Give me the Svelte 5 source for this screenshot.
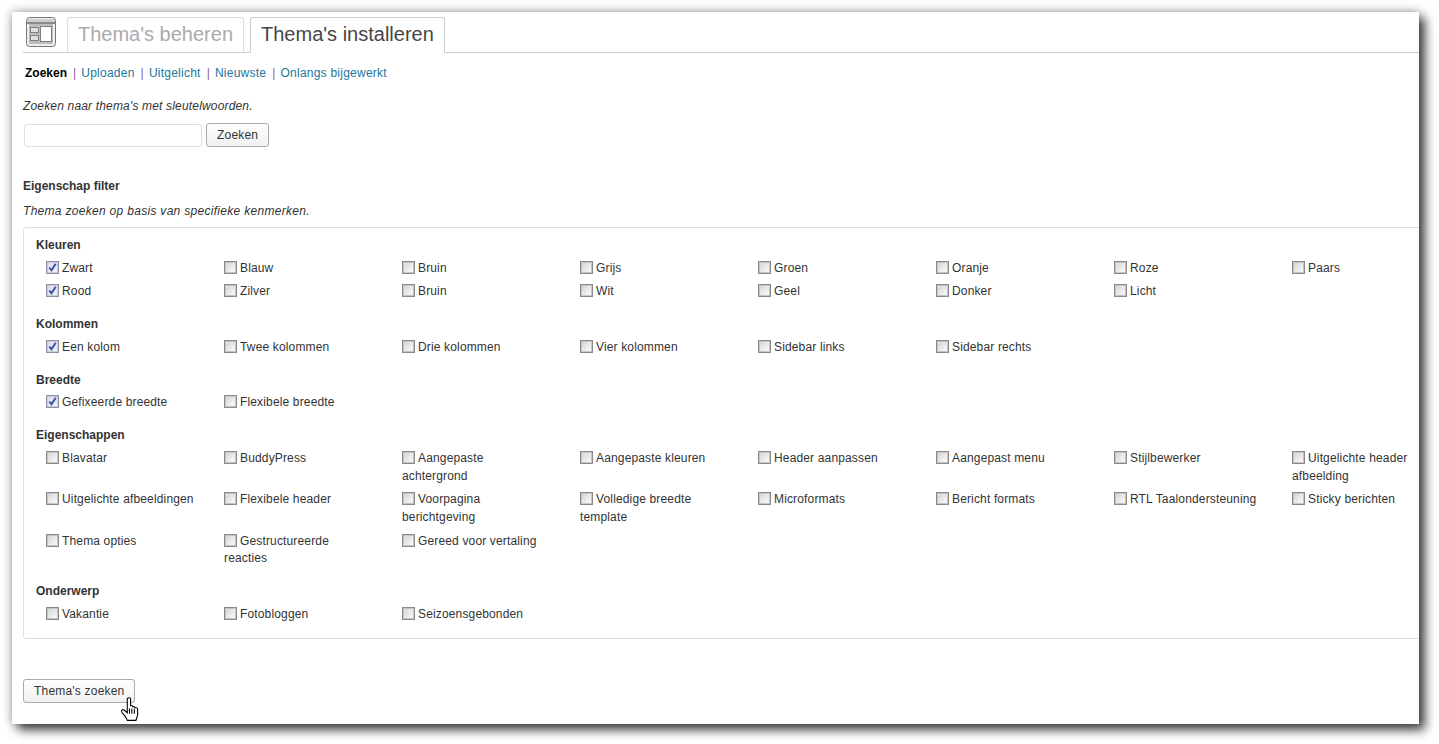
<script>
  const groups = [
    { title: 'Kleuren', items: [['Zwart',1],['Blauw'],['Bruin'],['Grijs'],['Groen'],['Oranje'],['Roze'],['Paars'],['Rood',1],['Zilver'],['Bruin'],['Wit'],['Geel'],['Donker'],['Licht']] },
    { title: 'Kolommen', items: [['Een kolom',1],['Twee kolommen'],['Drie kolommen'],['Vier kolommen'],['Sidebar links'],['Sidebar rechts']] },
    { title: 'Breedte', kind: 'narrow', items: [['Gefixeerde breedte',1],['Flexibele breedte']] },
    { title: 'Eigenschappen', kind: 'wrap', items: [['Blavatar'],['BuddyPress'],['Aangepaste achtergrond'],['Aangepaste kleuren'],['Header aanpassen'],['Aangepast menu'],['Stijlbewerker'],['Uitgelichte header afbeelding'],['Uitgelichte afbeeldingen'],['Flexibele header'],['Voorpagina berichtgeving'],['Volledige breedte template'],['Microformats'],['Bericht formats'],['RTL Taalondersteuning'],['Sticky berichten'],['Thema opties'],['Gestructureerde reacties'],['Gereed voor vertaling']] },
    { title: 'Onderwerp', items: [['Vakantie'],['Fotobloggen'],['Seizoensgebonden']] }
  ];
  const links = ['Uploaden','Uitgelicht','Nieuwste','Onlangs bijgewerkt'];
</script>

<div class="window">
  <header class="tabs">
    <svg class="logo" width="30" height="30" viewBox="0 0 30 30">
      <rect x=".5" y=".5" width="29" height="29" rx="3" fill="#efefef" stroke="#777"/>
      <rect x="1" y="2" width="28" height="3" fill="#cfcfcf"/>
      <rect x="1" y="5" width="28" height="2" fill="#8a8a8a"/>
      <rect x="3" y="7" width="24" height="20" fill="#bdbdbd"/>
      <rect x="4.500" y="10.500" width="8" height="5" fill="#e0e0e0" stroke="#808080"/>
      <rect x="4.500" y="18.500" width="8" height="5" fill="#e0e0e0" stroke="#808080"/>
      <rect x="14.500" y="9.500" width="11" height="15" fill="#fff" stroke="#808080"/>
    </svg>
    <span class="tab">Thema's beheren</span>
    <span class="tab active">Thema's installeren</span>
  </header>

  <nav class="sub"><b>Zoeken</b>{#each links as l}<i class="sep">|</i><a href="#top">{l}</a>{/each}</nav>

  <p class="note first">Zoeken naar thema's met sleutelwoorden.</p>
  <div class="search">
    <input type="text" />
    <button>Zoeken</button>
  </div>

  <h3>Eigenschap filter</h3>
  <p class="note second">Thema zoeken op basis van specifieke kenmerken.</p>

  <section class="box">
    {#each groups as g}
      <h4>{g.title}</h4>
      <div class="grid" class:narrow={g.kind === 'narrow'} class:wrap={g.kind === 'wrap'}>
        {#each g.items as it}
          <label>
            <span class="cb" class:on={it[1]}>
              {#if it[1]}
                <svg width="11" height="11" viewBox="0 0 11 11"><path d="M2.300 5.500 L4.500 8.300 L8.700 1.800" fill="none" stroke="#3f51a8" stroke-width="2"/></svg>
              {/if}
            </span>{it[0]}
          </label>
        {/each}
      </div>
    {/each}
  </section>

  <button class="submit">Thema's zoeken</button>
  <svg class="cursor" width="20" height="25" viewBox="0 0 18 23">
    <path d="M6.500 1.500C7 .5 9 .5 9.500 1.500V8c1-.5 2 0 2 1 1-.5 2 0 2 1 1-.5 2.500 0 2.500 1.500V16c0 2-1 3-1.500 5.500H6.500C6 19 3.500 16.500 1.500 14c-1-1.500.5-3 2-2l3 2.500Z" fill="#fff" stroke="#000" stroke-width="1"/>
    <path d="M8.500 10.500v5M10.700 10.500v5M13 11v4.500" stroke="#000" stroke-width="1" fill="none"/>
  </svg>
</div>

<style>
  :global(body) { margin: 0; background: #fff; overflow: hidden; }
  :global(#app) { width: 1439px; height: 744px; padding: 12px 0 0 12px; box-sizing: border-box; overflow: hidden; }
  .window {
    position: relative;
    box-sizing: border-box;
    width: 1407px;
    height: 712px;
    padding: 0 0 0 11px;
    background: #fff;
    overflow: hidden;
    font: 12px/18px "Liberation Sans", Arial, sans-serif;
    color: #333;
    letter-spacing: 0.15px;
    box-shadow: 6px 6px 10px rgba(0,0,0,.7), 0 0 10px rgba(0,0,0,.35);
  }
  .tabs {
    display: flex;
    align-items: flex-end;
    height: 40px;
    border-bottom: 1px solid #ccc;
    gap: 6px;
    padding-left: 3px;
  }
  .logo { align-self: flex-start; margin: 5px 5px 0 0; }
  .tab {
    box-sizing: border-box;
    height: 36px;
    margin-bottom: -1px;
    padding: 0 10px;
    border: 1px solid #ddd;
    border-bottom: 0;
    border-radius: 3px 3px 0 0;
    font-size: 20px;
    line-height: 33px;
    color: #aaa;
    letter-spacing: 0;
  }
  .tab.active {
    color: #464646;
    background: #fff;
    border-color: #ccc;
    border-bottom: 1px solid #fff;
  }
  .sub { margin: 11px 0 0 2px; height: 18px; white-space: nowrap; }
  .sub b { color: #000; letter-spacing: 0; }
  .sub a { color: #21759b; text-decoration: none; letter-spacing: .24px; }
  .sep { font-style: normal; color: #8a5a96; margin: 0 5px 0 6px; }
  .note { margin: 0; font-style: italic; }
  .first { margin-top: 15px; letter-spacing: .17px; }
  .second { margin-top: 7px; letter-spacing: .3px; }
  .search { display: flex; gap: 4px; margin-top: 8px; margin-left: 1px; align-items: flex-end; }
  input {
    box-sizing: border-box;
    width: 178px; height: 23px;
    border: 1px solid #dfdfdf;
    border-radius: 3px;
    background: #fff;
    padding: 0;
  }
  button {
    box-sizing: border-box;
    height: 24px;
    padding: 0 10px;
    border: 1px solid #aaa;
    border-radius: 3px;
    background: linear-gradient(#fff, #f0f0f0);
    font: inherit;
    color: #333;
    line-height: 22px;
    letter-spacing: .2px;
  }
  h3 { margin: 30px 0 0; font-size: 12px; line-height: 18px; color: #333; letter-spacing: 0; }
  .box {
    box-sizing: border-box;
    width: 1500px;
    height: 412px;
    margin-top: 7px;
    padding: 8px 12px 0;
    border: 1px solid #dfdfdf;
    border-radius: 3px;
  }
  h4 { margin: 0; font-size: 12px; line-height: 18px; color: #333; letter-spacing: 0; }
  .grid {
    display: grid;
    grid-template-columns: repeat(8, 178px);
    row-gap: 5px;
    margin: 5px 0 15px 10px;
  }
  .grid.narrow { margin-top: 4px; }
  .grid.wrap { row-gap: 6.200px; line-height: 17.600px; margin-top: 6px; margin-bottom: 14px; }
  label { display: block; padding-right: 28px; }
  .cb {
    display: inline-block;
    box-sizing: border-box;
    width: 13px; height: 13px;
    margin-right: 3px;
    vertical-align: -2px;
    border: 1px solid #8a8a8a;
    background: linear-gradient(135deg, #d4d4d4, #fdfdfd);
    box-shadow: inset 0 0 0 1px #c4c4c4;
  }
  .cb.on {
    border-color: #8c90a4;
    background: linear-gradient(135deg, #d6dae8, #f6f7fc);
    box-shadow: inset 0 0 0 1px #c8cbdc;
  }
  .cb svg { display: block; }
  .submit {
    position: absolute;
    left: 11px; top: 667px;
  }
  .cursor { position: absolute; left: 108px; top: 685px; }
</style>
